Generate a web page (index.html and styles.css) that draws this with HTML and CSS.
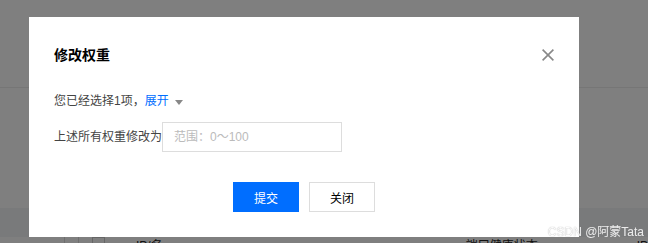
FILE: index.html
```html
<!DOCTYPE html>
<html lang="zh-CN">
<head>
    <meta charset="UTF-8">
    <meta name="viewport" content="width=device-width, initial-scale=1.0">
    <title>修改权重</title>
    <link rel="stylesheet" href="styles.css">
</head>
<body>
    <div class="page">
        <div class="page-top"></div>
        <div class="page-mid"></div>
        <div class="page-band">
            <div class="table-head">
                <span class="cell-line"></span>
                <span class="cell-line"></span>
                <span class="checkbox"></span>
                <span class="th th-name">IP/名称</span>
                <span class="th th-health">端口健康状态 ⓘ</span>
                <span class="th th-ip">IP</span>
            </div>
        </div>
    </div>

    <div class="mask"></div>

    <div class="dialog">
        <div class="dialog-header">
            <h3 class="dialog-title">修改权重</h3>
            <button class="dialog-close" aria-label="关闭">
                <svg width="12" height="12" viewBox="0 0 12 12">
                    <path d="M0.6 0.6 L11.4 11.4 M11.4 0.6 L0.6 11.4" stroke="#888" stroke-width="1.6" fill="none"/>
                </svg>
            </button>
        </div>

        <div class="dialog-body">
            <div class="row">
                您已经选择1项，<a class="link" href="#">展开</a><span class="caret"></span>
            </div>
            <div class="row row-input">
                <label for="weight">上述所有权重修改为</label>
                <input id="weight" class="input" type="text" placeholder="范围：0～100">
            </div>
        </div>

        <div class="dialog-footer">
            <button class="btn btn-primary">提交</button>
            <button class="btn">关闭</button>
        </div>
    </div>

    <div class="watermark">CSDN @阿蒙Tata</div>
</body>
</html>
```

FILE: styles.css
```css
* {
    box-sizing: border-box;
}
body {
    margin: 0;
    width: 648px;
    height: 243px;
    overflow: hidden;
    font-family: "Liberation Sans", "Noto Sans CJK SC", sans-serif;
    font-size: 12px;
    color: #333;
    background: #fff;
}

/* page under the mask */
.page-top {
    height: 88px;
    border-bottom: 1px solid #ececec;
}
.page-mid {
    height: 120px;
}
.page-band {
    height: 35px;
    background: #f3f4f6;
    padding-top: 29px;
}
.table-head {
    display: flex;
    height: 6px;
    background: #fff;
    overflow: hidden;
}
.cell-line {
    width: 15px;
    height: 30px;
    border-left: 1px solid #ddd;
}
.cell-line:first-child {
    margin-left: 64px;
}
.checkbox {
    width: 14px;
    height: 14px;
    border: 1px solid #ccc;
    margin-left: -1px;
}
.th {
    color: #222;
    font-size: 12px;
    line-height: 14px;
    padding-top: 2px;
}
.th-name {
    margin-left: 31px;
}
.th-health {
    margin-left: 293px;
}
.th-ip {
    margin-left: 88px;
}

.mask {
    position: fixed;
    inset: 0;
    background: rgba(0, 0, 0, 0.5);
}

/* dialog */
.dialog {
    position: absolute;
    left: 29px;
    top: 17px;
    width: 550px;
    height: 220px;
    background: #fff;
    padding: 28px 25px 25px;
}
.dialog-header {
    display: flex;
    justify-content: space-between;
    align-items: center;
    height: 20px;
}
.dialog-title {
    margin: 0;
    font-size: 14px;
    font-weight: bold;
    color: #000;
    line-height: 20px;
}
.dialog-close {
    border: none;
    background: none;
    padding: 0;
    width: 12px;
    height: 12px;
    cursor: pointer;
    display: flex;
}

.dialog-body {
    margin-top: 26px;
}
.row {
    display: flex;
    align-items: center;
    line-height: 20px;
    color: #444;
}
.link {
    color: #006eff;
    text-decoration: none;
}
.caret {
    width: 0;
    height: 0;
    border-left: 4px solid transparent;
    border-right: 4px solid transparent;
    border-top: 5px solid #888;
    margin-left: 6px;
    margin-top: 2px;
}
.row-input {
    margin-top: 11px;
}
.input {
    width: 180px;
    height: 30px;
    border: 1px solid #ddd;
    padding: 0 11px;
    font-family: inherit;
    font-size: 12px;
    color: #333;
    outline: none;
}
.input::placeholder {
    color: #bbb;
}

.dialog-footer {
    display: flex;
    justify-content: center;
    gap: 10px;
    margin-top: 30px;
}
.btn {
    width: 66px;
    height: 30px;
    border: 1px solid #ddd;
    background: #fff;
    color: #000;
    font-family: inherit;
    font-size: 12px;
    cursor: pointer;
}
.btn-primary {
    background: #006eff;
    border-color: #006eff;
    color: #fff;
}

.watermark {
    position: absolute;
    right: 4px;
    top: 222px;
    font-size: 12px;
    color: #fff;
    opacity: 0.85;
    text-shadow: 0 0 1px #888;
}
```
